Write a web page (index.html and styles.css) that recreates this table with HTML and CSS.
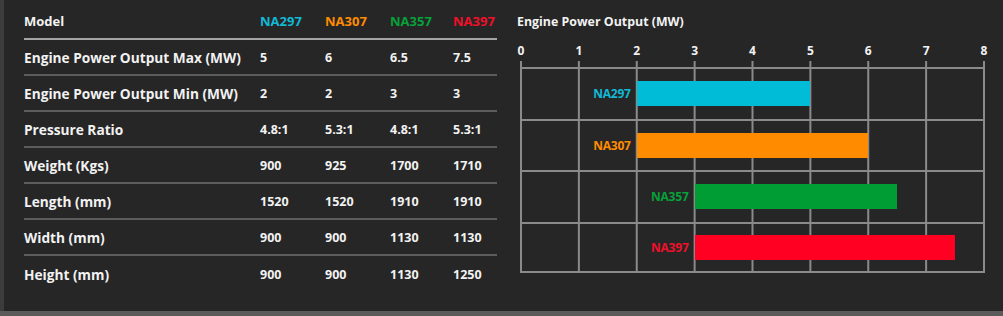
FILE: index.html
```html
<!DOCTYPE html>
<html>
<head>
<meta charset="utf-8">
<link rel="stylesheet" href="styles.css">
</head>
<body>
<div class="panel">
  <div class="specs">
    <div class="row head">
      <div class="cell label">Model</div>
      <div class="cell c297">NA297</div>
      <div class="cell c307">NA307</div>
      <div class="cell c357">NA357</div>
      <div class="cell c397">NA397</div>
    </div>
    <div class="row">
      <div class="cell label">Engine Power Output Max (MW)</div>
      <div class="cell">5</div><div class="cell">6</div><div class="cell">6.5</div><div class="cell">7.5</div>
    </div>
    <div class="row">
      <div class="cell label">Engine Power Output Min (MW)</div>
      <div class="cell">2</div><div class="cell">2</div><div class="cell">3</div><div class="cell">3</div>
    </div>
    <div class="row">
      <div class="cell label">Pressure Ratio</div>
      <div class="cell">4.8:1</div><div class="cell">5.3:1</div><div class="cell">4.8:1</div><div class="cell">5.3:1</div>
    </div>
    <div class="row">
      <div class="cell label">Weight (Kgs)</div>
      <div class="cell">900</div><div class="cell">925</div><div class="cell">1700</div><div class="cell">1710</div>
    </div>
    <div class="row">
      <div class="cell label">Length (mm)</div>
      <div class="cell">1520</div><div class="cell">1520</div><div class="cell">1910</div><div class="cell">1910</div>
    </div>
    <div class="row">
      <div class="cell label">Width (mm)</div>
      <div class="cell">900</div><div class="cell">900</div><div class="cell">1130</div><div class="cell">1130</div>
    </div>
    <div class="row last">
      <div class="cell label">Height (mm)</div>
      <div class="cell">900</div><div class="cell">900</div><div class="cell">1130</div><div class="cell">1250</div>
    </div>
  </div>
  <div class="chart">
    <div class="chart-title">Engine Power Output (MW)</div>
    <div class="axis">
      <span class="tick">0</span><span class="tick">1</span><span class="tick">2</span><span class="tick">3</span><span class="tick">4</span><span class="tick">5</span><span class="tick">6</span><span class="tick">7</span><span class="tick">8</span>
    </div>
    <div class="plot">
      <div class="bar-row">
        <div class="bar-label c297" style="width:115.75px">NA297</div>
        <div class="bar b297" style="width:173.6px"></div>
      </div>
      <div class="bar-row">
        <div class="bar-label c307" style="width:115.75px">NA307</div>
        <div class="bar b307" style="width:231.5px"></div>
      </div>
      <div class="bar-row">
        <div class="bar-label c357" style="width:173.6px">NA357</div>
        <div class="bar b357" style="width:202.6px"></div>
      </div>
      <div class="bar-row">
        <div class="bar-label c397" style="width:173.6px">NA397</div>
        <div class="bar b397" style="width:260.4px"></div>
      </div>
    </div>
  </div>
</div>
<div class="foot"></div>
</body>
</html>
```
FILE: styles.css
```css
* { box-sizing: border-box; }
html, body { margin: 0; padding: 0; }
body {
  width: 1003px;
  height: 316px;
  background: #262626;
  font-family: "Open Sans", Lato, sans-serif;
  font-weight: 700;
  color: #f2f2f2;
  overflow: hidden;
}
.panel {
  height: 311px;
  border-left: 4px solid #3c3c3c;
  padding: 4px 0 0 20px;
  display: flex;
  gap: 20px;
}
.foot {
  height: 5px;
  background: #5a5a5a;
}
.specs {
  width: 473px;
  display: flex;
  flex-direction: column;
}
.row {
  display: grid;
  grid-template-columns: 236px 65px 65px 63px 44px;
  height: 36px;
  align-items: center;
  border-bottom: 2px solid #5c5c5c;
  font-size: 12.5px;
}
.row.head { border-bottom: 2px solid #a4a4a4; }
.row.head .cell { font-size: 13px; }
.row.last { border-bottom: none; }
.cell { white-space: nowrap; }
.row .label { font-size: 13.7px; }
.c297 { color: #12b9d6; }
.c307 { color: #ff8c00; }
.c357 { color: #07a13a; }
.c397 { color: #f0102a; }
.chart {
  width: 470px;
  display: flex;
  flex-direction: column;
}
.chart-title {
  height: 36px;
  line-height: 36px;
  font-size: 12.4px;
}
.axis {
  margin-left: 3px;
  width: 465px;
  height: 21px;
  display: flex;
  justify-content: space-between;
  align-items: center;
  padding: 0 1px;
  font-size: 12px;
}
.tick {
  width: 0;
  display: flex;
  justify-content: center;
}
.plot {
  margin-left: 3px;
  width: 465px;
  height: 212px;
  padding-top: 6px;
  background-image: linear-gradient(to right, #8a8a8a 2px, transparent 2px);
  background-size: 57.875px 100%;
  background-repeat: repeat-x;
  display: flex;
  flex-direction: column;
}
.bar-row {
  height: 51.5px;
  border-top: 2px solid #8a8a8a;
  display: flex;
  align-items: center;
  padding-left: 1px;
}
.bar-row:last-child { border-bottom: 2px solid #8a8a8a; }
.bar-label {
  flex: none;
  text-align: right;
  padding-right: 6px;
  font-size: 12px;
  letter-spacing: -0.2px;
}
.bar { height: 25px; flex: none; }
.b297 { background: #00bcd6; }
.b307 { background: #ff8c00; }
.b357 { background: #009c34; }
.b397 { background: #ff0022; }
```
